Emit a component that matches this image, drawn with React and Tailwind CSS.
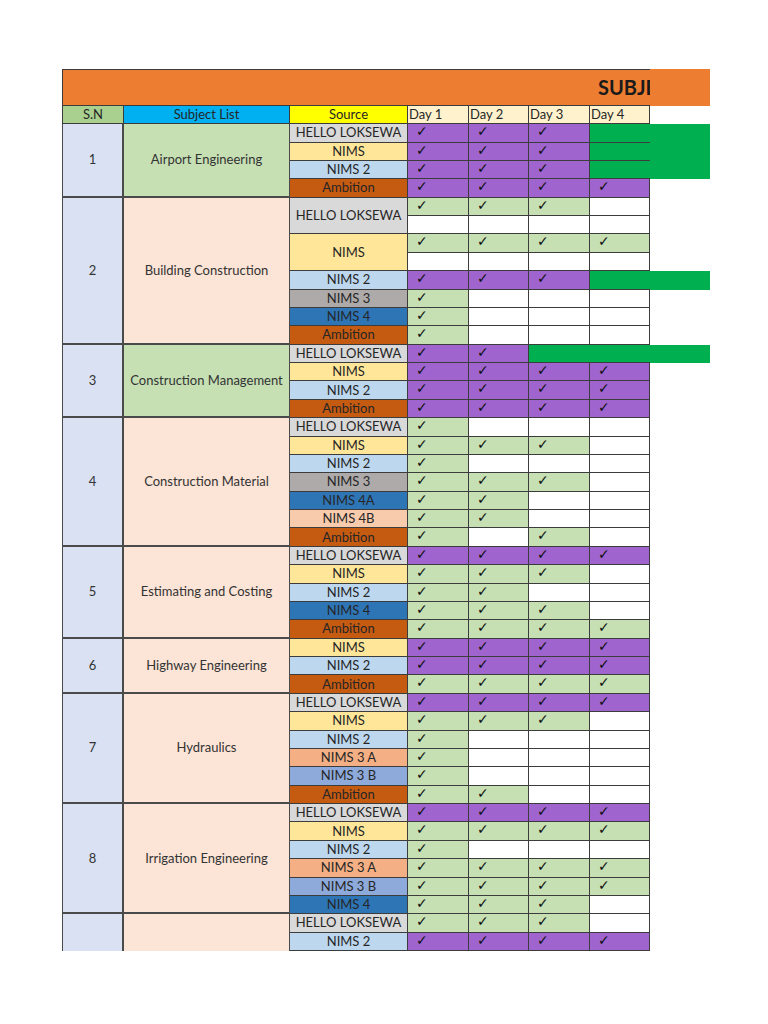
import React from "react";

// Source colours, as in the sheet
const SOURCE_BG = {
  "HELLO LOKSEWA": "bg-[#d9d9d9]",
  NIMS: "bg-[#ffe699]",
  "NIMS 2": "bg-[#bdd7ee]",
  "NIMS 3": "bg-[#aeaaaa]",
  "NIMS 4": "bg-[#2e75b6]",
  "NIMS 4A": "bg-[#2e75b6]",
  "NIMS 4B": "bg-[#f8cbad]",
  "NIMS 3 A": "bg-[#f4b084]",
  "NIMS 3 B": "bg-[#8eaadb]",
  Ambition: "bg-[#c55a11]",
};

// P = purple tick, G = green tick, W = empty, X = green band
const GROUPS = [
  {
    sn: "1",
    subject: "Airport Engineering",
    green: true,
    rows: [
      { src: "HELLO LOKSEWA", days: ["PPPX"] },
      { src: "NIMS", days: ["PPPX"] },
      { src: "NIMS 2", days: ["PPPX"] },
      { src: "Ambition", days: ["PPPP"] },
    ],
  },
  {
    sn: "2",
    subject: "Building Construction",
    rows: [
      { src: "HELLO LOKSEWA", days: ["GGGW", "WWWW"] },
      { src: "NIMS", days: ["GGGG", "WWWW"] },
      { src: "NIMS 2", days: ["PPPX"] },
      { src: "NIMS 3", days: ["GWWW"] },
      { src: "NIMS 4", days: ["GWWW"] },
      { src: "Ambition", days: ["GWWW"] },
    ],
  },
  {
    sn: "3",
    subject: "Construction Management",
    green: true,
    rows: [
      { src: "HELLO LOKSEWA", days: ["PPXX"] },
      { src: "NIMS", days: ["PPPP"] },
      { src: "NIMS 2", days: ["PPPP"] },
      { src: "Ambition", days: ["PPPP"] },
    ],
  },
  {
    sn: "4",
    subject: "Construction Material",
    rows: [
      { src: "HELLO LOKSEWA", days: ["GWWW"] },
      { src: "NIMS", days: ["GGGW"] },
      { src: "NIMS 2", days: ["GWWW"] },
      { src: "NIMS 3", days: ["GGGW"] },
      { src: "NIMS 4A", days: ["GGWW"] },
      { src: "NIMS 4B", days: ["GGWW"] },
      { src: "Ambition", days: ["GWGW"] },
    ],
  },
  {
    sn: "5",
    subject: "Estimating and Costing",
    rows: [
      { src: "HELLO LOKSEWA", days: ["PPPP"] },
      { src: "NIMS", days: ["GGGW"] },
      { src: "NIMS 2", days: ["GGWW"] },
      { src: "NIMS 4", days: ["GGGW"] },
      { src: "Ambition", days: ["GGGG"] },
    ],
  },
  {
    sn: "6",
    subject: "Highway Engineering",
    rows: [
      { src: "NIMS", days: ["PPPP"] },
      { src: "NIMS 2", days: ["PPPP"] },
      { src: "Ambition", days: ["GGGG"] },
    ],
  },
  {
    sn: "7",
    subject: "Hydraulics",
    rows: [
      { src: "HELLO LOKSEWA", days: ["PPPP"] },
      { src: "NIMS", days: ["GGGW"] },
      { src: "NIMS 2", days: ["GWWW"] },
      { src: "NIMS 3 A", days: ["GWWW"] },
      { src: "NIMS 3 B", days: ["GWWW"] },
      { src: "Ambition", days: ["GGWW"] },
    ],
  },
  {
    sn: "8",
    subject: "Irrigation Engineering",
    rows: [
      { src: "HELLO LOKSEWA", days: ["PPPP"] },
      { src: "NIMS", days: ["GGGG"] },
      { src: "NIMS 2", days: ["GWWW"] },
      { src: "NIMS 3 A", days: ["GGGG"] },
      { src: "NIMS 3 B", days: ["GGGG"] },
      { src: "NIMS 4", days: ["GGGW"] },
    ],
  },
  {
    sn: "",
    subject: "",
    open: true, // sheet continues below the fold
    rows: [
      { src: "HELLO LOKSEWA", days: ["GGGW"] },
      { src: "NIMS 2", days: ["PPPP"] },
    ],
  },
];

const DAY_W = ["w-[61px]", "w-[60px]", "w-[61px]", "w-[60px]"];

function DayCell({ kind, width }) {
  if (kind === "X") {
    return <div className={`${width} shrink-0 border-b border-[#3c3c3c] bg-[#00b050]`} />;
  }
  const bg = kind === "P" ? "bg-[#a064cf]" : kind === "G" ? "bg-[#c6e0b4]" : "bg-white";
  return (
    <div
      className={`${width} shrink-0 border-r border-b border-[#3c3c3c] ${bg} pl-[8px] font-['DejaVu_Sans',sans-serif] text-[14px] leading-[15px] text-[#111]`}
    >
      {kind !== "W" && "✓"}
    </div>
  );
}

function DayLine({ days }) {
  const band = days.includes("X");
  return (
    <div className="flex h-[18.375px]">
      {days.split("").map((c, i) => (
        <DayCell key={i} kind={c} width={DAY_W[i]} />
      ))}
      <div className={`w-[60px] shrink-0 ${band ? "bg-[#00b050]" : ""}`} />
    </div>
  );
}

function SourceRow({ row }) {
  return (
    <div className="flex">
      <div
        className={`w-[118px] shrink-0 border-r border-b border-[#3c3c3c] flex items-center justify-center text-[13px] leading-[15px] text-[#262626] ${SOURCE_BG[row.src]}`}
      >
        {row.src}
      </div>
      <div className="flex flex-col">
        {row.days.map((d, i) => (
          <DayLine key={i} days={d} />
        ))}
      </div>
    </div>
  );
}

function Group({ g }) {
  const bottom = g.open ? "" : "border-b-2";
  return (
    <div className="flex">
      <div className={`w-[62px] shrink-0 border-l border-r-2 ${bottom} border-[#4a4a4a] bg-[#d9e1f2] flex items-center justify-center text-[13px] leading-[15px] text-[#333]`}>
        {g.sn}
      </div>
      <div
        className={`w-[166px] shrink-0 border-r ${bottom} border-[#4a4a4a] flex items-center justify-center text-[13px] leading-[15px] text-[#333] ${
          g.green ? "bg-[#c6e0b4]" : "bg-[#fce4d6]"
        }`}
      >
        {g.subject}
      </div>
      <div className="flex flex-col">
        {g.rows.map((r, i) => (
          <SourceRow key={i} row={r} />
        ))}
      </div>
    </div>
  );
}

export default function App() {
  return (
    <div className="w-[768px] h-[1024px] bg-white pt-[69px] pl-[62px] font-['Lato',sans-serif] text-[#262626]">
      {/* Title bar */}
      <div className="flex w-[648px] h-[36.75px] bg-[#ed7d31]">
        <div className="w-[588px] shrink-0 border-t border-l border-b border-[#3c3c3c] overflow-hidden flex items-center">
          <span className="pl-[535px] whitespace-nowrap text-[20px] leading-[24px] font-bold text-[#1a1a1a]">SUBJECT</span>
        </div>
      </div>

      {/* Column headers */}
      <div className="flex h-[18.375px] text-[13px] leading-[17px]">
        <div className="w-[62px] shrink-0 border-l border-r border-b border-[#3c3c3c] bg-[#a9d08e] text-center">S.N</div>
        <div className="w-[166px] shrink-0 border-r border-b border-[#3c3c3c] bg-[#00b0f0] text-center">Subject List</div>
        <div className="w-[118px] shrink-0 border-r border-b border-[#3c3c3c] bg-[#ffff00] text-center">Source</div>
        {["Day 1", "Day 2", "Day 3", "Day 4"].map((d, i) => (
          <div key={d} className={`${DAY_W[i]} shrink-0 border-r border-b border-[#3c3c3c] bg-[#fff2cc] pl-[1px]`}>
            {d}
          </div>
        ))}
      </div>

      {GROUPS.map((g, i) => (
        <Group key={i} g={g} />
      ))}
    </div>
  );
}
